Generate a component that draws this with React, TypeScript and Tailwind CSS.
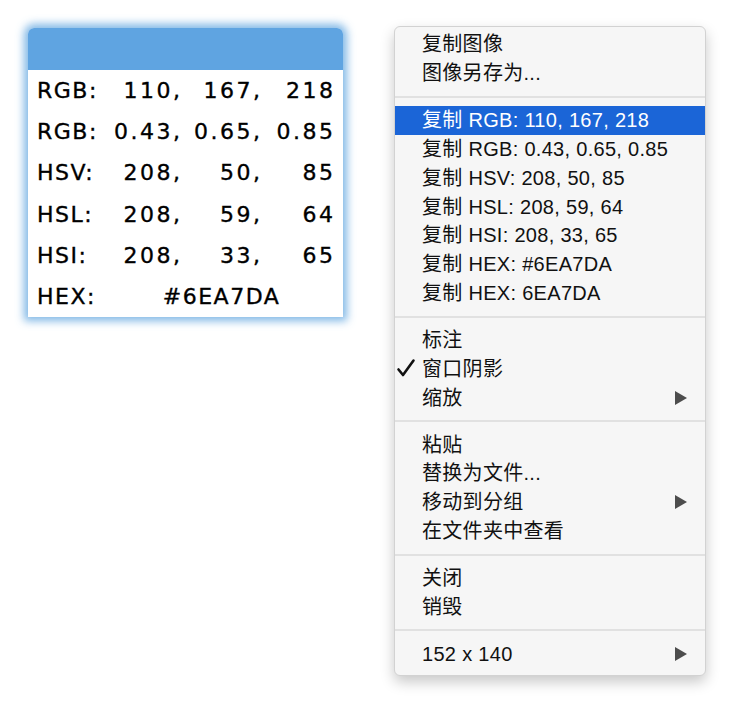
import React from "react";

const Arrow = () => (
  <svg width="14" height="16" viewBox="0 0 14 16" className="shrink-0">
    <polygon points="1,1 13,8 1,15" fill="#4d4d4d" />
  </svg>
);

const Check = () => (
  <svg width="20" height="20" viewBox="0 0 20 20" className="absolute left-[-26px] top-[-1px]">
    <path d="M2.5 11.5 L7 17 L17.5 2.5" fill="none" stroke="#111" strokeWidth="2.6" strokeLinecap="round" strokeLinejoin="round" />
  </svg>
);

type Item = { label: string; hl?: boolean; check?: boolean; sub?: boolean };

const groups: Item[][] = [
  [{ label: "复制图像" }, { label: "图像另存为..." }],
  [
    { label: "复制 RGB: 110, 167, 218", hl: true },
    { label: "复制 RGB: 0.43, 0.65, 0.85" },
    { label: "复制 HSV: 208, 50, 85" },
    { label: "复制 HSL: 208, 59, 64" },
    { label: "复制 HSI: 208, 33, 65" },
    { label: "复制 HEX: #6EA7DA" },
    { label: "复制 HEX: 6EA7DA" },
  ],
  [{ label: "标注" }, { label: "窗口阴影", check: true }, { label: "缩放", sub: true }],
  [
    { label: "粘贴" },
    { label: "替换为文件..." },
    { label: "移动到分组", sub: true },
    { label: "在文件夹中查看" },
  ],
  [{ label: "关闭" }, { label: "销毁" }],
  [{ label: "152 x 140", sub: true }],
];

const rows: { label: string; vals: string[] }[] = [
  { label: "RGB:", vals: ["110,", "167,", "218"] },
  { label: "RGB:", vals: ["0.43,", "0.65,", "0.85"] },
  { label: "HSV:", vals: ["208,", "50,", "85"] },
  { label: "HSL:", vals: ["208,", "59,", "64"] },
  { label: "HSI:", vals: ["208,", "33,", "65"] },
];

export default function App() {
  return (
    <div className="w-[736px] h-[712px] bg-white flex items-start pl-[28px] pt-[26px] gap-[51px]">
      {/* Color info window */}
      <div className="mt-[2px] w-[315px] h-[289px] rounded-t-[6px] bg-white shadow-[0_0_9px_4px_rgba(98,166,224,0.8)] flex flex-col overflow-hidden">
        <div className="h-[42px] bg-[#5fa4e1] shrink-0" />
        <div
          className="flex-1 flex flex-col pl-[9px] pr-[10px] text-[22px] text-black [-webkit-text-stroke:0.35px_#000]"
          style={{ fontFamily: '"DejaVu Sans", Verdana, sans-serif' }}
        >
          {rows.map((r, i) => (
            <div key={i} className="grid grid-cols-[73px_70px_80px_73px] h-[41.2px] items-center">
              <span className="tracking-[1.5px]">{r.label}</span>
              {r.vals.map((v, j) => (
                <span key={j} className="text-right tracking-[2.5px] mr-[-2.5px]">
                  {v}
                </span>
              ))}
            </div>
          ))}
          <div className="grid grid-cols-[73px_223px] h-[41.2px] items-center">
            <span className="tracking-[1.5px]">HEX:</span>
            <span className="text-center tracking-[1.5px]">#6EA7DA</span>
          </div>
        </div>
      </div>

      {/* Context menu */}
      <div
        className="w-[312px] rounded-[6px] bg-[#f6f6f6] border border-[#d2d2d2] shadow-[0_6px_14px_rgba(0,0,0,0.22)] pt-[3px] pb-[7px] text-[20px] text-[#111] tracking-[0.3px]"
        style={{ fontFamily: '"Liberation Sans", "Noto Sans CJK SC", sans-serif' }}
      >
        {groups.map((g, gi) => (
          <div key={gi}>
            {gi > 0 && (
              <div className="h-[18px] flex items-center">
                <div className="w-full h-[2px] bg-[#e1e1e1]" />
              </div>
            )}
            {g.map((it, ii) => (
              <div
                key={ii}
                className={
                  "h-[28.85px] flex items-center pl-[27px] pr-[17px] leading-none " +
                  (it.hl ? "bg-[#1b65d7] text-white" : "")
                }
              >
                <span className="relative flex-1 whitespace-nowrap">
                  {it.check && <Check />}
                  {it.label}
                </span>
                {it.sub && <Arrow />}
              </div>
            ))}
          </div>
        ))}
      </div>
    </div>
  );
}
